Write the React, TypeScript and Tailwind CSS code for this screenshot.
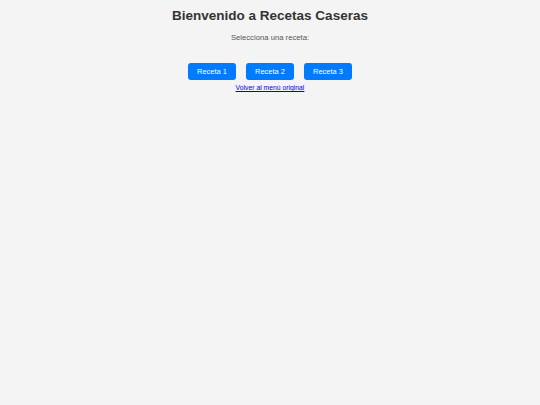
export default function App() {
  const recetas = ["Receta 1", "Receta 2", "Receta 3"];
  return (
    <div className="min-h-[405px] w-full bg-[#f4f4f4] text-center font-['Liberation_Sans',Arial,sans-serif]">
      <h1 className="pt-[8px] text-[13.5px] font-bold leading-[16px] text-[#333]">
        Bienvenido a Recetas Caseras
      </h1>
      <p className="mt-[9px] text-[7.7px] leading-[9px] text-[#555]">Selecciona una receta:</p>
      <div className="mt-[21px] flex justify-center gap-[10px]">
        {recetas.map((r) => (
          <button
            key={r}
            className="h-[17px] w-[48px] rounded-[3px] bg-[#007bff] text-[7.5px] font-normal leading-[17px] text-white"
          >
            {r}
          </button>
        ))}
      </div>
      <div className="mt-[4px] text-[6.8px] leading-[8px]">
        <a href="#" className="text-[#0000ee] underline">
          Volver al menú original
        </a>
      </div>
    </div>
  );
}
